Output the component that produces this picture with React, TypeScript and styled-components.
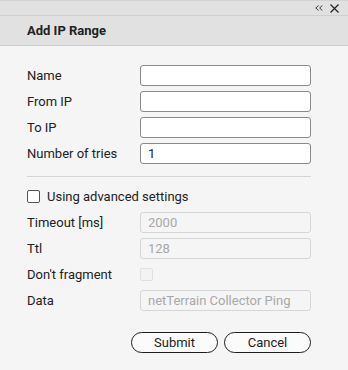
import React from "react";
import styled, { createGlobalStyle } from "styled-components";

const GlobalStyle = createGlobalStyle`
  html, body {
    margin: 0;
    padding: 0;
    background: #f5f5f5;
  }
  body {
    font-family: Roboto, "Liberation Sans", sans-serif;
    color: #222;
  }
`;

const Dialog = styled.div`
  width: 348px;
  height: 370px;
  display: flex;
  flex-direction: column;
  background: #f5f5f5;
`;

const TopBar = styled.div`
  height: 14px;
  display: flex;
  justify-content: flex-end;
  align-items: center;
  gap: 7px;
  padding-right: 9px;
  background: #e1e1e1;
  border-top: 1px solid #d2d2d2;
  border-bottom: 1px solid #cfcfcf;
`;

const Header = styled.div`
  height: 29px;
  display: flex;
  align-items: center;
  padding-left: 27px;
  background: #e1e1e1;
  border-bottom: 1px solid #cdcdcd;
  font-size: 13px;
  font-weight: 700;
  color: #222;
`;

const Body = styled.div`
  padding: 19px 37px 0 27px;
  display: flex;
  flex-direction: column;
`;

const Row = styled.div`
  display: grid;
  grid-template-columns: 113px 171px;
  align-items: center;
  height: 21px;
  margin-bottom: 5px;
`;

const Label = styled.label`
  font-size: 13px;
  color: #222;
`;

const Input = styled.input`
  box-sizing: border-box;
  width: 171px;
  height: 21px;
  margin: 0;
  padding: 0 7px;
  border: 1px solid #8a8a8a;
  border-radius: 3px;
  background: #fff;
  font-family: Roboto, "Liberation Sans", sans-serif;
  font-size: 13px;
  color: #222;
  outline: none;

  &:disabled {
    border-color: #d6d6d6;
    background: #f5f5f5;
    color: #a8a8a8;
  }
`;

const Separator = styled.hr`
  width: 284px;
  margin: 7px 0 9px 0;
  border: none;
  border-top: 1px solid #d4d4d4;
`;

const CheckRow = styled.label`
  display: flex;
  align-items: center;
  gap: 7px;
  height: 21px;
  margin-bottom: 5px;
  font-size: 13px;
  color: #222;
`;

const Box = styled.span<{ $disabled?: boolean }>`
  box-sizing: border-box;
  width: 13px;
  height: 13px;
  border-radius: 2px;
  border: 1px solid ${(p) => (p.$disabled ? "#e0e0e0" : "#555")};
  background: ${(p) => (p.$disabled ? "#f3f3f3" : "#fff")};
`;

const Buttons = styled.div`
  display: flex;
  justify-content: flex-end;
  gap: 6px;
  margin-top: 16px;
`;

const Button = styled.button`
  box-sizing: border-box;
  width: 87px;
  height: 21px;
  padding: 0;
  border: 1px solid #1e1e1e;
  border-radius: 11px;
  background: #fbfbfb;
  font-family: Roboto, "Liberation Sans", sans-serif;
  font-size: 13px;
  color: #222;
`;

const CollapseIcon = () => (
  <svg width="8" height="6" viewBox="0 0 8 6">
    <path d="M3.5 0.5 L0.8 3 L3.5 5.5 M7.3 0.5 L4.6 3 L7.3 5.5" fill="none" stroke="#333" strokeWidth="1" />
  </svg>
);

const CloseIcon = () => (
  <svg width="9" height="9" viewBox="0 0 9 9">
    <path d="M0.5 0.5 L8.5 8.5 M8.5 0.5 L0.5 8.5" stroke="#222" strokeWidth="1.2" />
  </svg>
);

const App: React.FC = () => {
  return (
    <Dialog>
      <GlobalStyle />
      <TopBar>
        <CollapseIcon />
        <CloseIcon />
      </TopBar>
      <Header>Add IP Range</Header>
      <Body>
        <Row>
          <Label>Name</Label>
          <Input />
        </Row>
        <Row>
          <Label>From IP</Label>
          <Input />
        </Row>
        <Row>
          <Label>To IP</Label>
          <Input />
        </Row>
        <Row>
          <Label>Number of tries</Label>
          <Input defaultValue="1" />
        </Row>
        <Separator />
        <CheckRow>
          <Box />
          Using advanced settings
        </CheckRow>
        <Row>
          <Label>Timeout [ms]</Label>
          <Input disabled defaultValue="2000" />
        </Row>
        <Row>
          <Label>Ttl</Label>
          <Input disabled defaultValue="128" />
        </Row>
        <Row>
          <Label>Don't fragment</Label>
          <Box $disabled />
        </Row>
        <Row>
          <Label>Data</Label>
          <Input disabled defaultValue="netTerrain Collector Ping" />
        </Row>
        <Buttons>
          <Button>Submit</Button>
          <Button>Cancel</Button>
        </Buttons>
      </Body>
    </Dialog>
  );
};

export default App;
